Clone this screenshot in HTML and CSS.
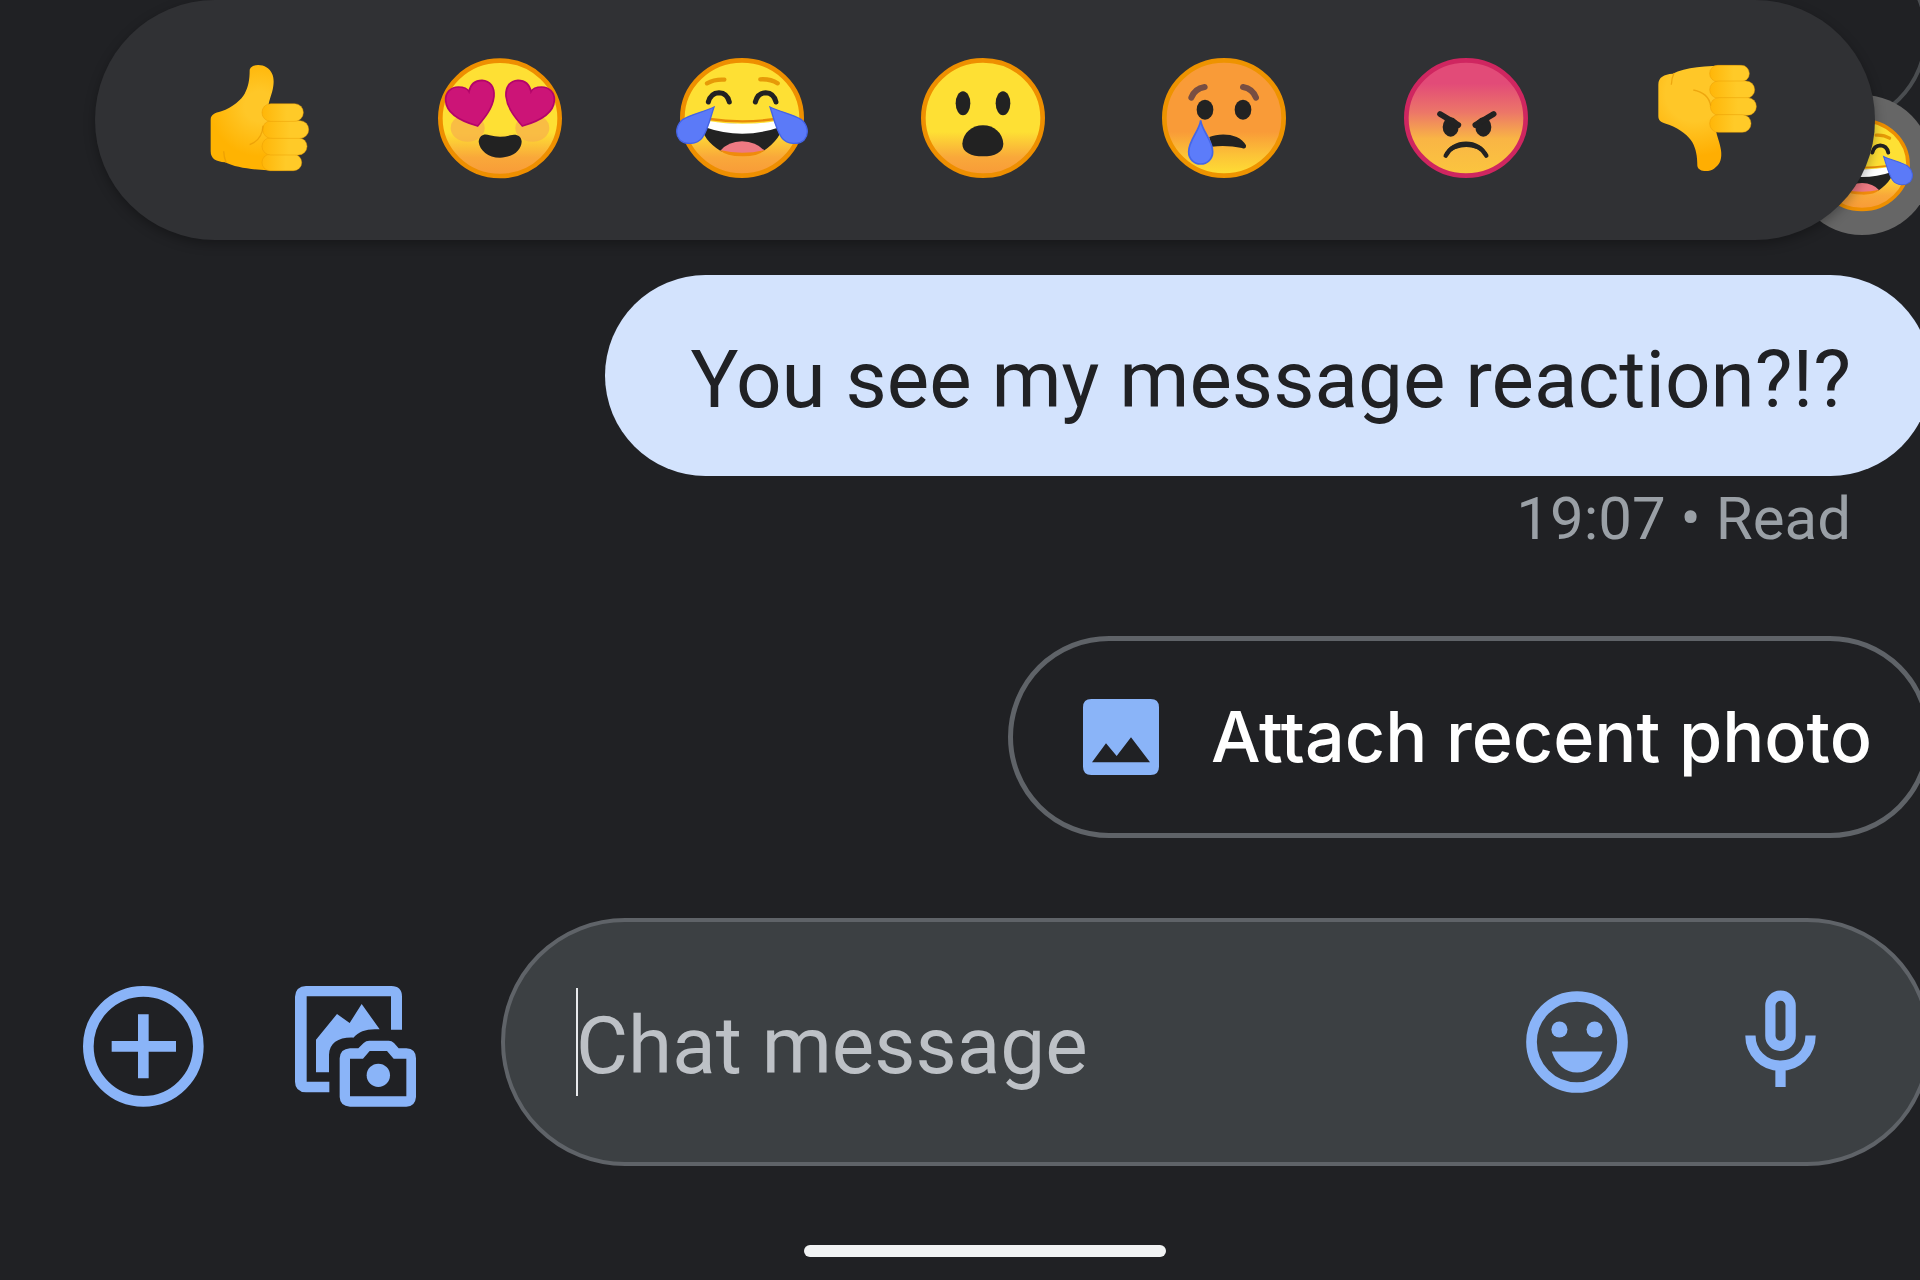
FILE: index.html
```html
<!DOCTYPE html>
<html lang="en">
<head>
<meta charset="utf-8">
<meta name="viewport" content="width=device-width, initial-scale=1">
<title>Messages</title>
<link rel="stylesheet" href="styles.css">
</head>
<body>
<svg class="defs" aria-hidden="true">
  <defs>
    <linearGradient id="face" x1="0" y1="0" x2="0" y2="1">
      <stop offset="0.62" stop-color="#fee034"/>
      <stop offset="0.84" stop-color="#f9a83a"/>
      <stop offset="1" stop-color="#f89a38"/>
    </linearGradient>
    <linearGradient id="faceSad" x1="0" y1="0" x2="0" y2="1">
      <stop offset="0.62" stop-color="#f99b38"/>
      <stop offset="0.82" stop-color="#fcc237"/>
      <stop offset="1" stop-color="#fee034"/>
    </linearGradient>
    <linearGradient id="faceAngry" x1="0" y1="0" x2="0" y2="1">
      <stop offset="0.2" stop-color="#e24b78"/>
      <stop offset="0.45" stop-color="#ec7668"/>
      <stop offset="0.68" stop-color="#f9b545"/>
      <stop offset="1" stop-color="#fbc63e"/>
    </linearGradient>
    <radialGradient id="handUp" gradientUnits="userSpaceOnUse" cx="540" cy="320" r="150">
      <stop offset="0.3" stop-color="#ffc728"/>
      <stop offset="1" stop-color="#ffb302"/>
    </radialGradient>
    <radialGradient id="handDown" gradientUnits="userSpaceOnUse" cx="500" cy="430" r="190">
      <stop offset="0.45" stop-color="#ffc728"/>
      <stop offset="1" stop-color="#ffae02"/>
    </radialGradient>
    <linearGradient id="finger" x1="0" y1="0" x2="1" y2="0">
      <stop offset="0" stop-color="#ffb608"/>
      <stop offset="0.6" stop-color="#ffca28"/>
    </linearGradient>
    <path id="palm" d="M510 212C512 193 545 192 560 203C580 216 584 235 581 258C578 282 568 300 566 320L640 330V512C560 514 480 510 436 488C410 486 393 478 393 455V360C393 345 405 340 425 335C460 322 485 300 495 282C506 262 510 240 510 212Z"/>
    <g id="fingers" fill="url(#finger)" stroke="#e99b04" stroke-opacity=".45" stroke-width="3">
      <rect x="547" y="464" width="119" height="49" rx="24"/>
      <rect x="547" y="414" width="135" height="52" rx="26"/>
      <rect x="549" y="363" width="138" height="53" rx="26"/>
      <rect x="547" y="312" width="124" height="53" rx="26"/>
    </g>
    <symbol id="joy" viewBox="49 37 396 396">
      <ellipse cx="247" cy="235" rx="179" ry="173" fill="url(#face)" stroke="#ee8f00" stroke-width="14"/>
      <path d="M142 131Q165 118 194 120M302 119Q332 117 354 131" fill="none" stroke="#e69a08" stroke-width="13" stroke-linecap="round"/>
      <path d="M146 187Q153 160 178 159Q203 160 209 187M287 187Q294 160 318 159Q343 160 349 187" fill="none" stroke="#222" stroke-width="15" stroke-linecap="round"/>
      <path d="M128 245Q247 262 368 245Q374 290 310 335H184Q118 292 128 245Z" fill="#222"/>
      <path d="M140 243Q247 262 356 243L362 262Q247 302 134 262Z" fill="#fff"/>
      <path d="M150 238Q247 252 346 238" fill="none" stroke="#e78b08" stroke-width="7"/>
      <path d="M182 333Q206 306 247 305Q290 306 314 333Q247 351 182 333Z" fill="#ee7a82"/>
      <path d="M180 331Q247 347 315 331Q295 351 247 350Q200 350 180 331Z" fill="#f08b0b"/>
      <path d="M163 202C152 235 145 270 128 294C112 316 76 316 60 300C44 281 51 254 70 239C92 224 132 217 163 202ZM331 202C342 235 349 270 366 294C382 316 418 316 434 300C450 281 443 254 424 239C402 224 362 217 331 202Z" fill="#5b7af8" stroke="#4463e4" stroke-width="4"/>
    </symbol>
  </defs>
</svg>

<main class="screen">
  <div class="previous">
    <div class="previous-bubble"></div>
    <div class="badge"><svg viewBox="49 37 396 396" role="img" aria-label="Face with tears of joy"><use href="#joy" x="49" y="37" width="396" height="396"/></svg></div>
  </div>

  <div class="reactions" role="toolbar" aria-label="Reactions">
    <button class="reaction" type="button" aria-label="Thumbs up">
      <svg viewBox="340 157 396 396"><use href="#palm" fill="url(#handUp)"/><use href="#fingers"/><path d="M550 378Q548 420 510 435M432 455Q433 475 440 490" fill="none" stroke="#e79a04" stroke-opacity=".7" stroke-width="4"/></svg>
    </button>
    <button class="reaction" type="button" aria-label="Heart eyes">
      <svg viewBox="1065 157 396 396">
        <ellipse cx="1263" cy="356" rx="179" ry="173" fill="url(#face)" stroke="#ee8f00" stroke-width="14"/>
        <ellipse cx="1166" cy="385" rx="51" ry="41" fill="#f7b24a" opacity=".75"/>
        <ellipse cx="1360" cy="385" rx="51" ry="41" fill="#f7b24a" opacity=".75"/>
        <path id="heart" d="M1196 379C1150 366 1102 342 1100 303C1098 277 1117 262 1138 262C1154 262 1166 268 1170 276C1174 255 1188 242 1209 242C1234 243 1247 263 1245 290C1241 326 1217 355 1196 379Z" fill="#cc1477" stroke="#b3046a" stroke-width="5"/>
        <use href="#heart" transform="translate(2526 0) scale(-1 1)"/>
        <path d="M1199 426C1201 404 1218 401 1232 407Q1263 415 1294 407C1310 401 1328 408 1328 426C1327 452 1300 474 1263 474C1227 474 1202 452 1199 426Z" fill="#222"/>
      </svg>
    </button>
    <button class="reaction" type="button" aria-label="Tears of joy">
      <svg viewBox="49 37 396 396"><use href="#joy" x="49" y="37" width="396" height="396"/></svg>
    </button>
    <button class="reaction" type="button" aria-label="Surprised">
      <svg viewBox="773 37 396 396">
        <ellipse cx="971" cy="235" rx="179" ry="173" fill="url(#face)" stroke="#ee8f00" stroke-width="14"/>
        <g fill="#222"><ellipse cx="911" cy="191" rx="22" ry="36"/><ellipse cx="1031" cy="191" rx="22" ry="36"/>
        <path d="M909 312C911 280 938 257 971 257C1004 257 1030 280 1032 312C1032 338 1006 350 971 350C936 350 909 338 909 312Z"/></g>
      </svg>
    </button>
    <button class="reaction" type="button" aria-label="Crying">
      <svg viewBox="57 37 396 396">
        <ellipse cx="255" cy="235" rx="179" ry="173" fill="url(#faceSad)" stroke="#ee9300" stroke-width="14"/>
        <path d="M157 174Q167 147 197 142M312 142Q341 147 351 174" fill="none" stroke="#784e42" stroke-width="18" stroke-linecap="round"/>
        <ellipse cx="198" cy="210" rx="25" ry="30" fill="#222"/><ellipse cx="312" cy="210" rx="25" ry="30" fill="#222"/>
        <path d="M211 292C244 278 303 281 321 317C322 326 316 329 309 325Q265 316 218 321Z" fill="#222"/>
        <path d="M185 242C188 272 221 302 221 336C221 358 205 373 185 373C165 373 149 358 149 336C149 302 182 272 185 242Z" fill="#5c7cfa" stroke="#4566e6" stroke-width="5"/>
      </svg>
    </button>
    <button class="reaction" type="button" aria-label="Angry">
      <svg viewBox="780 37 396 396">
        <ellipse cx="978" cy="235" rx="179" ry="173" fill="url(#faceAngry)" stroke="#cf2660" stroke-width="14"/>
        <ellipse cx="932" cy="262" rx="24" ry="29" fill="#222"/><ellipse cx="1030" cy="262" rx="24" ry="29" fill="#222"/>
        <path d="M900 223L955 256M1061 223L1006 256" stroke="#222" stroke-width="17" stroke-linecap="round"/>
        <path d="M917 348C941 303 1014 303 1039 348" fill="none" stroke="#222" stroke-width="13" stroke-linecap="round"/>
        <path d="M914 346C930 292 1026 292 1042 346Q980 298 914 346Z" fill="#222"/>
      </svg>
    </button>
    <button class="reaction" type="button" aria-label="Thumbs down">
      <svg viewBox="64 157 396 396"><g transform="translate(-277 710) scale(1 -1)"><use href="#palm" fill="url(#handDown)"/><use href="#fingers"/><path d="M550 392Q544 430 498 439M432 455Q433 475 440 490" fill="none" stroke="#e79a04" stroke-opacity=".7" stroke-width="4"/></g></svg>
    </button>
  </div>

  <section class="thread">
    <p class="bubble">You see my message reaction?!?</p>
    <p class="status">19:07 • Read</p>
    <button class="chip" type="button">
      <svg class="chip-icon" viewBox="265 237 228 228" aria-hidden="true"><path fill="#8ab4f8" fill-rule="evenodd" d="M290 237H468Q493 237 493 262V440Q493 465 468 465H290Q265 465 265 440V262Q265 237 290 237ZM292 427H466L409 352L366 408L334 370Z"/></svg>
      <span>Attach recent photo</span>
    </button>
  </section>

  <form class="composer">
    <div class="tools">
      <button class="tool" type="button" aria-label="Add attachment">
        <svg viewBox="69 79 363 363" fill="none" stroke="#8ab4f8" stroke-width="32"><circle cx="250" cy="260" r="165"/><path d="M250 164V356M155 260H348"/></svg>
      </button>
      <button class="tool" type="button" aria-label="Gallery and camera">
        <svg viewBox="703 79 363 363" fill="#8ab4f8">
          <path d="M736 79H992Q1024 79 1024 111V210H991V110H738V366H806V398H736Q703 396 703 366V111Q705 80 736 79Z"/>
          <path d="M766 240L829 163L867 190L903 133L957 209C920 206 896 214 878 234C835 232 806 250 805 285V338H766Z"/>
          <path fill-rule="evenodd" d="M868 266H893L909 250Q916 243 926 243H984Q993 243 1000 250L1014 266H1037Q1066 268 1066 296V412Q1064 440 1037 441H868Q838 439 837 412V296Q838 268 868 266ZM868 297V410H1037V297H999L979 274H927L907 297Z"/>
          <circle cx="953" cy="347" r="35"/>
        </svg>
      </button>
    </div>
    <div class="pill">
      <div class="field">
        <input class="input" type="text" placeholder="Chat message" aria-label="Chat message">
        <span class="caret"></span>
      </div>
      <div class="pill-actions">
        <button class="emoji" type="button" aria-label="Emoji">
          <svg viewBox="140 97 305 305" fill="#8ab4f8"><circle cx="292.500" cy="249.500" r="136" fill="none" stroke="#8ab4f8" stroke-width="32"/><circle cx="240" cy="212" r="24"/><circle cx="345" cy="212" r="24"/><path d="M217 278H369C357 316 328 341 293 341C257 341 229 316 217 278Z"/></svg>
        </button>
        <button class="mic" type="button" aria-label="Record voice message">
          <svg viewBox="795 90 213 292" fill="none" stroke="#8ab4f8" stroke-width="31"><rect x="871" y="107" width="61" height="151" rx="30"/><path d="M811 227C811 280 852 318 901.500 318C951 318 992 280 992 227M901.500 318V382"/></svg>
        </button>
      </div>
    </div>
  </form>

  <div class="home-bar"></div>
</main>
</body>
</html>
```
FILE: styles.css
```css
* {
  box-sizing: border-box;
}

body {
  margin: 0;
  min-height: 100vh;
  overflow: hidden;
  background: #202124;
  color: #e8eaed;
  font-family: Roboto, "Liberation Sans", sans-serif;
}

button {
  padding: 0;
  border: 0;
  background: none;
  color: inherit;
  font: inherit;
  cursor: pointer;
}

svg {
  display: block;
  width: 100%;
  height: 100%;
}

.defs {
  position: absolute;
  width: 0;
  height: 0;
}

/* The screen runs a little past the right edge of the window. */
.screen {
  position: relative;
  display: flex;
  flex-direction: column;
  margin-right: -50px;
}

.previous-bubble {
  position: absolute;
  top: -60px;
  right: 42px;
  width: 400px;
  height: 188px;
  border: 4px solid #4a4d50;
  border-radius: 100px;
}

.badge {
  position: absolute;
  top: 95px;
  right: 38px;
  width: 140px;
  height: 140px;
  padding: 19px;
  border-radius: 50%;
  background: #666;
}

.reactions {
  position: relative;
  display: flex;
  justify-content: space-between;
  margin: 0 95px;
  padding: 52px 102px 56px 98px;
  border-radius: 120px;
  background: #303134;
  box-shadow: 0 4px 12px rgba(0, 0, 0, 0.3);
}

.reaction {
  width: 132px;
  height: 132px;
}

.thread {
  display: flex;
  flex-direction: column;
  align-items: flex-end;
  padding: 35px 39px 0 0;
}

.bubble {
  margin: 0;
  padding: 57px 80px 48px 85px;
  border-radius: 101px;
  background: #d3e3fd;
  color: #202124;
  font-size: 80px;
  line-height: 96px;
  white-space: nowrap;
}

.status {
  margin: 7px 80px 0 0;
  color: #9aa0a6;
  font-size: 60px;
  line-height: 72px;
}

.chip {
  display: flex;
  align-items: center;
  gap: 52px;
  margin-top: 81px;
  padding: 48px 54px 48px 70px;
  border: 5px solid #5f6368;
  border-radius: 101px;
  color: #fff;
  font-family: Inter, Roboto, sans-serif;
  font-size: 70px;
  font-weight: 500;
  line-height: 96px;
  white-space: nowrap;
}

.chip-icon {
  width: 76px;
  height: 76px;
}

.composer {
  display: flex;
  align-items: center;
  gap: 85px;
  margin-top: 80px;
  padding: 0 39px 0 83px;
}

.tools {
  display: flex;
  gap: 91px;
  padding-top: 8px;
}

.tool {
  width: 121px;
  height: 121px;
}

.pill {
  display: flex;
  flex: 1;
  align-items: center;
  padding: 66px 111px 66px 71px;
  border: 4px solid #5f6368;
  border-radius: 125px;
  background: #3c4043;
}

.field {
  position: relative;
  flex: 1;
}

.input {
  display: block;
  width: 100%;
  height: 108px;
  padding: 8px 0 0;
  border: 0;
  outline: 0;
  background: none;
  color: #e8eaed;
  font: 80px Roboto, "Liberation Sans", sans-serif;
}

.input::placeholder {
  color: #bdc1c6;
  opacity: 1;
}

.caret {
  position: absolute;
  top: 0;
  left: 0;
  width: 2px;
  height: 108px;
  background: #e8eaed;
}

.pill-actions {
  display: flex;
  align-items: center;
  gap: 117px;
}

.emoji {
  width: 102px;
  height: 102px;
}

.mic {
  width: 71px;
  height: 97px;
  margin-bottom: 8px;
}

.home-bar {
  align-self: center;
  width: 362px;
  height: 12px;
  margin: 79px 0 22px;
  border-radius: 6px;
  background: #f1f3f4;
}
```
